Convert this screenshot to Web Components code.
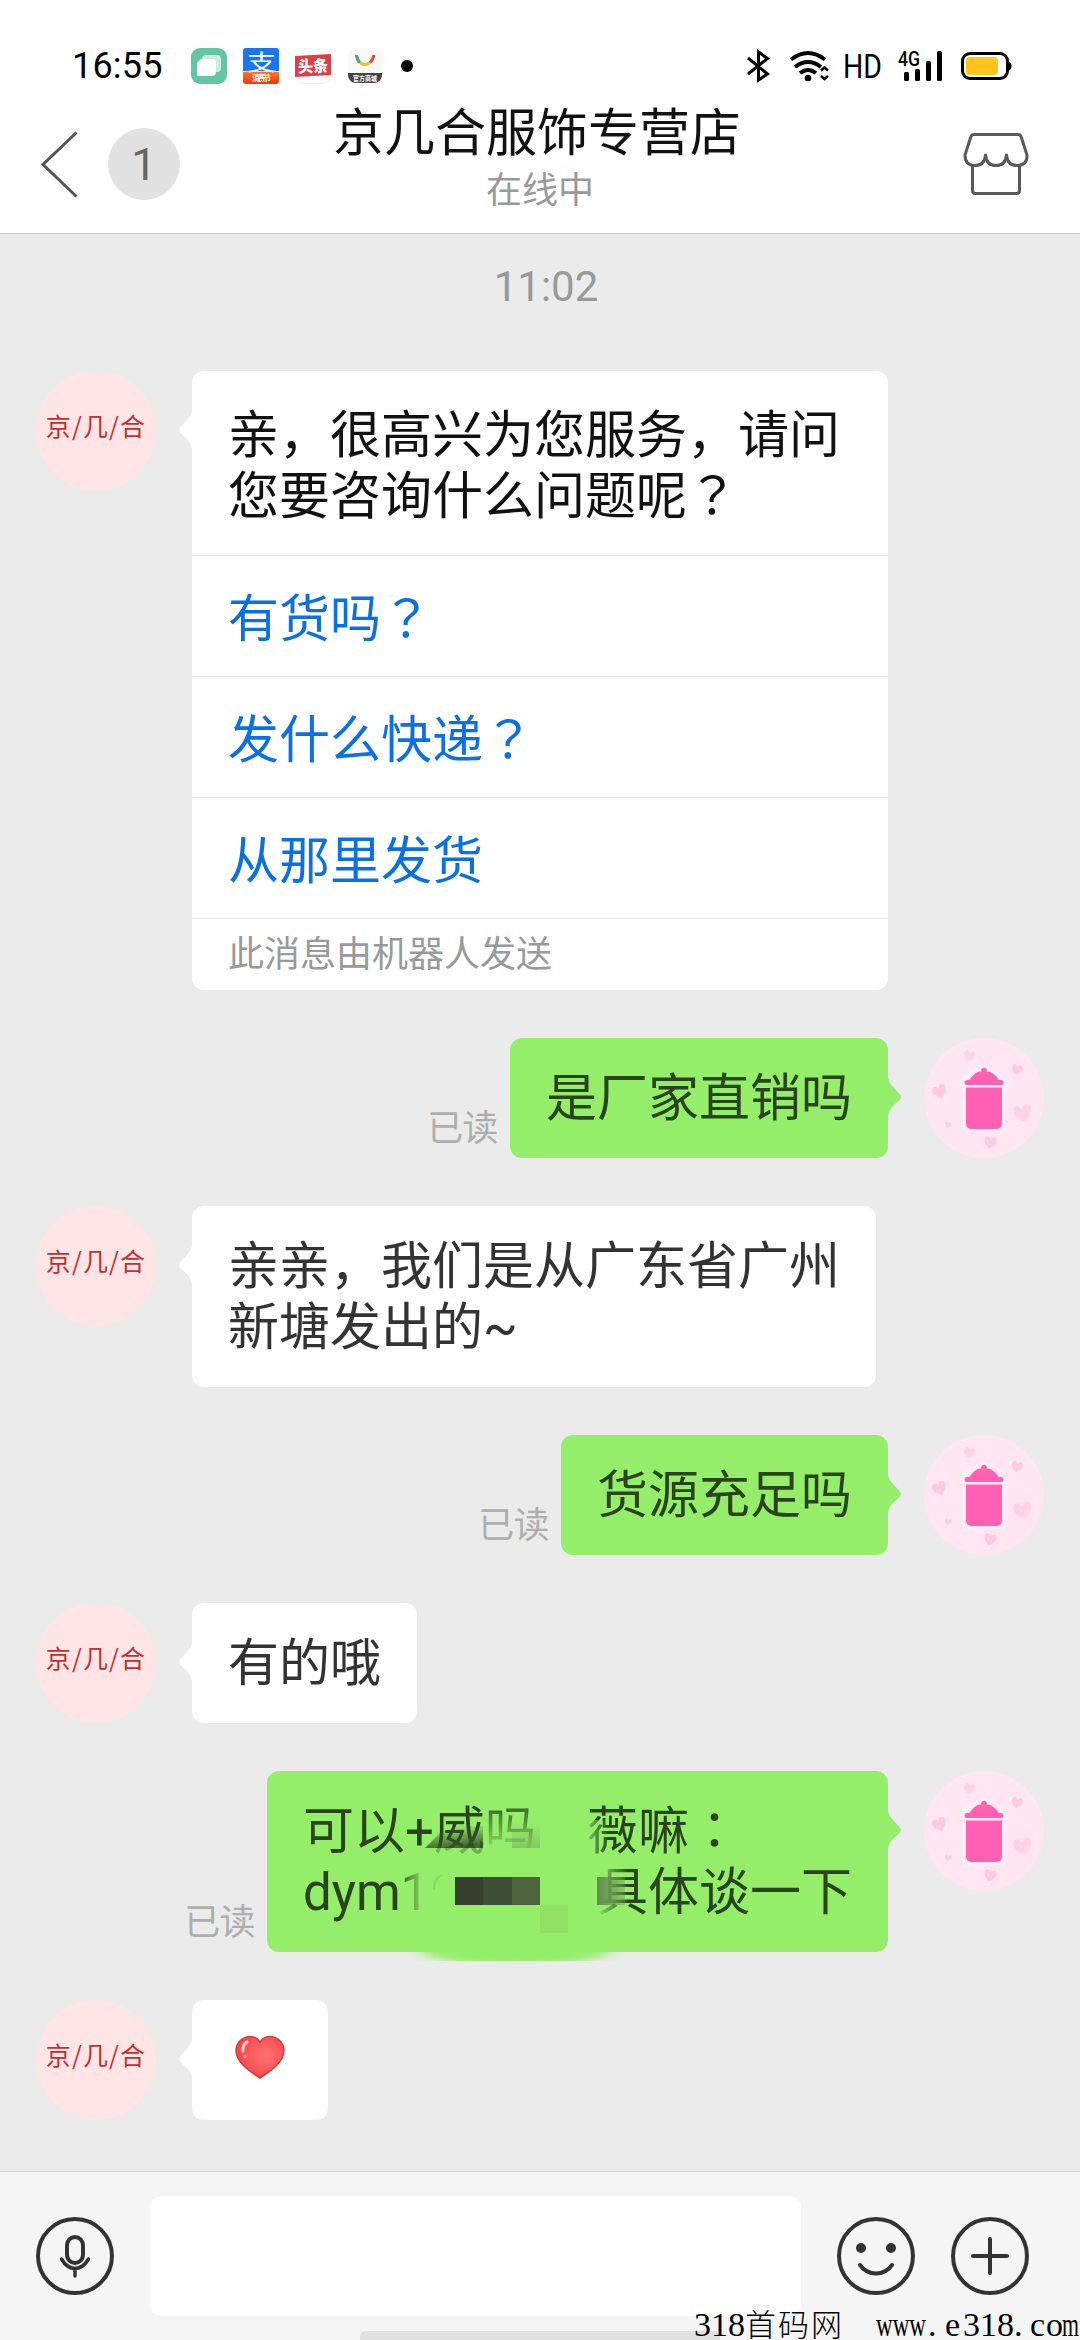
<!DOCTYPE html>
<html lang="zh-CN">
<head>
<meta charset="utf-8">
<title>京几合服饰专营店</title>
<style>
  html, body { margin: 0; padding: 0; }
  body {
    width: 1080px; height: 2340px; overflow: hidden; background: #ebebeb;
    font-family: Roboto, "Noto Sans CJK SC", sans-serif; color: #333;
  }
</style>
</head>
<body>
<chat-page>
  <status-bar slot="top">16:55</status-bar>
  <chat-header slot="top" unread="1"><span slot="title">京几合服饰专营店</span><span slot="state">在线中</span></chat-header>
  <chat-time>11:02</chat-time>
  <chat-message side="left">
    <bot-card>
      <span slot="greeting">亲，很高兴为您服务，请问<br>您要咨询什么问题呢<full-mark lang="zh-TW">？</full-mark></span>
      <bot-option>有货吗<full-mark lang="zh-TW">？</full-mark></bot-option>
      <bot-option>发什么快递<full-mark lang="zh-TW">？</full-mark></bot-option>
      <bot-option>从那里发货</bot-option>
      <span slot="note">此消息由机器人发送</span>
    </bot-card>
  </chat-message>
  <chat-message side="right" read><chat-text>是厂家直销吗</chat-text></chat-message>
  <chat-message side="left"><chat-text>亲亲，我们是从广东省广州<br>新塘发出的~</chat-text></chat-message>
  <chat-message side="right" read><chat-text>货源充足吗</chat-text></chat-message>
  <chat-message side="left"><chat-text>有的哦</chat-text></chat-message>
  <chat-message side="right" read><masked-text><span slot="first">可以+威吗　薇嘛<full-mark lang="zh-TW">：</full-mark></span><span slot="start">dym1</span><span slot="end">具体谈一下</span></masked-text></chat-message>
  <chat-message side="left"><heart-emoji></heart-emoji></chat-message>
  <input-bar slot="bottom"></input-bar>
  <page-mark slot="bottom"></page-mark>
</chat-page>

<script>
const define = (name, html) => {
  const t = document.createElement('template');
  t.innerHTML = html;
  customElements.define(name, class extends HTMLElement {
    constructor() {
      super();
      this.attachShadow({ mode: 'open' }).appendChild(t.content.cloneNode(true));
      const n = this.shadowRoot.querySelector('[data-attr]');
      if (n) n.textContent = this.getAttribute(n.dataset.attr) || '';
    }
  });
};

define('chat-page', `
<style>
  :host { display: flex; flex-direction: column; width: 1080px; height: 2340px; position: relative; overflow: hidden; background: #ebebeb; }
  main { flex: 1; display: flex; flex-direction: column; gap: 48px; }
</style>
<slot name="top"></slot><main><slot></slot></main><slot name="bottom"></slot>`);

define('status-bar', `
<style>
  :host { display: flex; height: 100px; padding: 32px 68px 0 72px; box-sizing: border-box; background: #fff; color: #000; align-items: center; justify-content: space-between; font-size: 36px; }
  .l, .r { display: flex; align-items: center; }
  .time { width: 117px; letter-spacing: .2px; }
  svg { display: block; }
</style>
<div class="l"><span class="time"><slot></slot></span>
<svg width="226" height="40" viewBox="187 46 226 40">
  <defs><linearGradient id="or" x1="0" y1="0" x2="0" y2="1"><stop offset="0" stop-color="#ff7d1c"/><stop offset="1" stop-color="#ee3410"/></linearGradient>
  <clipPath id="al"><rect x="241" y="48" width="36" height="36" rx="3"/></clipPath>
  <clipPath id="ml"><rect x="346" y="48" width="34" height="35" rx="8"/></clipPath></defs>
  <rect x="189" y="48" width="36" height="36" rx="9" fill="#64c5a5"/>
  <rect x="200" y="55" width="19" height="17" rx="4" fill="#c9eee1"/>
  <path d="M199 59H210Q214 59 214 63V72Q214 76 210 76H195V63Z" fill="#fff"/>
  <g clip-path="url(#al)"><rect x="241" y="48" width="36" height="24" fill="#1777f2"/><rect x="241" y="71" width="36" height="13" fill="url(#or)"/></g>
  <text x="245" y="69.500" font-size="22" textLength="29" lengthAdjust="spacingAndGlyphs" fill="#fff">支</text>
  <path d="M241 71.500H277" stroke="#ffe0a0" stroke-width="1"/>
  <text x="250" y="81" font-size="8" textLength="19" fill="#fff" font-weight="700">消费节</text>
  <rect x="293.500" y="48.500" width="35" height="35" rx="8" fill="#fff" stroke="#f1f1f1"/>
  <path d="M293 56L329 54V75L293 77Z" fill="#dd3f48"/>
  <text x="296" y="72" font-size="16" textLength="30" lengthAdjust="spacingAndGlyphs" font-weight="900" fill="#fff" transform="rotate(-2 311 66)">头条</text>
  <rect x="346" y="48" width="34" height="35" rx="8" fill="#f8f8f8"/>
  <g clip-path="url(#ml)"><rect x="345" y="73" width="37" height="12" fill="#444"/></g>
  <text x="351" y="80.500" font-size="6.500" textLength="24" lengthAdjust="spacingAndGlyphs" font-weight="700" fill="#fff">官方商城</text>
  <g fill="none" stroke-width="3"><path d="M354.500 55Q355 60 358 62.500" stroke="#46a96b"/><path d="M358 62.500Q363 66.500 368 62.500" stroke="#edbb35"/><path d="M368 62.500Q371.500 59 372 55" stroke="#d64a3d"/></g>
  <circle cx="405" cy="66" r="6" fill="#000"/>
</svg></div>
<svg class="r" width="268" height="40" viewBox="744 46 268 40">
  <path d="M748 58L767.500 74L758.500 80V52L767.500 58.500L748 74" fill="none" stroke="#000" stroke-width="3"/>
  <g fill="none" stroke="#000" stroke-width="4"><path d="M791 59.500Q808 46.500 825 59.500"/><path d="M795 67Q808 57 821 67"/><path d="M800 73Q808 67 816 73"/><path d="M821 70.500L824.500 67.500L828 70.500M821 76L824.500 79L828 76" stroke-width="2.500"/></g>
  <circle cx="808" cy="78" r="3.300"/>
  <text x="843" y="78" font-size="33.500" textLength="39" lengthAdjust="spacingAndGlyphs">HD</text>
  <text x="898" y="66" font-size="20" font-weight="500" textLength="22" lengthAdjust="spacingAndGlyphs">4G</text>
  <rect x="904" y="72" width="5" height="9" rx="1.500"/><rect x="915" y="69" width="5" height="12" rx="1.500"/><rect x="926" y="61" width="5" height="20" rx="1.500"/><rect x="937" y="51" width="5" height="30" rx="1.500"/>
  <rect x="962.500" y="53.500" width="45" height="25" rx="7.500" fill="#fff" stroke="#000" stroke-width="3"/>
  <path d="M1008 61Q1011.500 62 1011.500 66T1008 71Z"/>
  <rect x="966" y="57" width="32" height="18" rx="4" fill="#fcc41d"/>
</svg>`);

define('chat-header', `
<style>
  :host { display: grid; grid-template-columns: 300px 1fr 300px; height: 134px; box-sizing: border-box; background: #fff; border-bottom: 1px solid #c9c9c9; }
  .l { display: flex; align-items: center; gap: 28px; padding: 0 0 5px 40px; }
  .badge { width: 72px; height: 72px; border-radius: 50%; background: #e1e1e1; color: #666; font-size: 45px; line-height: 74px; text-align: center; }
  .c { display: flex; flex-direction: column; align-items: center; white-space: nowrap; }
  .t { font-size: 51px; line-height: 60px; color: #111; margin-top: 4px; margin-right: 6px; }
  .s { font-size: 36px; line-height: 48px; color: #999; margin-top: 3px; }
  .r { display: flex; align-items: center; justify-content: flex-end; padding: 0 50px 5px 0; }
  svg { display: block; }
</style>
<div class="l"><svg width="40" height="70" viewBox="40 129 40 70"><path d="M76.500 132.500L43 164.500L76.500 196.500" fill="none" stroke="#555" stroke-width="3"/></svg><div class="badge" data-attr="unread"></div></div>
<div class="c"><div class="t"><slot name="title"></slot></div><div class="s"><slot name="state"></slot></div></div>
<div class="r"><svg width="68" height="66" viewBox="962 131 68 66"><g fill="none" stroke="#5a5a5a" stroke-width="3" stroke-linejoin="round"><path d="M974 134.500H1018Q1020.500 134.500 1021.200 137L1027 155Q1027.500 165.500 1017 165.500Q1007.500 165.500 1006.500 155Q1005.500 165.500 996 165.500T985.500 155Q984.500 165.500 975 165.500Q965 165.500 965 155L970.800 137Q971.500 134.500 974 134.500Z"/><path d="M972.500 165V190.500Q972.500 193.500 975.500 193.500H1016.500Q1019.500 193.500 1019.500 190.500V165"/></g></svg></div>`);

define('chat-time', `
<style>:host { display: block; height: 89px; padding-top: 28px; box-sizing: border-box; font-size: 42px; line-height: 50px; color: #999; text-align: center; padding-left: 12px; }</style><slot></slot>`);

define('full-mark', `<style>:host { font-family: "Noto Sans CJK TC", sans-serif; line-height: 0; }</style><slot></slot>`);

define('shop-avatar', `
<style>:host { display: flex; width: 120px; height: 120px; border-radius: 50%; background: #ffe5e5; justify-content: center; box-sizing: border-box; padding-top: 36px; font: 400 25px/37px "Noto Sans CJK SC", sans-serif; letter-spacing: 1.2px; color: #c22f2f; white-space: nowrap; }</style><span>京/几/合</span>`);

define('user-avatar', `
<style>:host, svg { display: block; width: 120px; height: 120px; }</style>
<svg viewBox="0 0 120 120"><defs><path id="h" d="M0 5C-8 0-6-6-2.500-5.500Q-.5-5 0-3Q.5-5 2.500-5.500C6-6 8 0 0 5Z"/></defs>
<circle cx="60" cy="60" r="60" fill="#ffe6f0"/>
<g fill="#fdcadd"><use href="#h" transform="translate(45 18) rotate(12) scale(1)" opacity=".65"/><use href="#h" transform="translate(93 32) rotate(12)"/><use href="#h" transform="translate(16 54) rotate(-22) scale(1.25)"/><use href="#h" transform="translate(99 76) rotate(-12) scale(1.6)" opacity=".7"/><use href="#h" transform="translate(24 87) rotate(12) scale(.6)" opacity=".8"/><use href="#h" transform="translate(66 105) rotate(12) scale(1.1)"/></g>
<path d="M37 41L44 35Q50 30 60 27Q72 31 78 38L83 43L81 92Q77 95 60 95Q41 95 39 91Z" fill="#fff0fa" opacity=".8"/>
<g fill="#ff60b1"><circle cx="60" cy="32.500" r="2.800"/><path d="M44.500 43Q51 33.500 56 33.500H64Q70 34 75.500 43Z"/><rect x="40.500" y="42" width="39" height="5" rx="2.500"/><path d="M42 49.500H78V85Q78 91 72 91H48Q42 91 42 85Z"/></g></svg>`);

define('chat-message', `
<style>
  :host { display: flex; padding: 0 36px; align-items: flex-start; gap: 36px; }
  :host([side="right"]) { flex-direction: row-reverse; }
  .bubble { position: relative; border-radius: 12px; background: #fff; color: #333; }
  :host([side="right"]) .bubble { background: #95ee6a; color: #2a441f; }
  .tail { position: absolute; top: 40px; left: -13px; width: 13px; height: 38px; fill: #fff; }
  :host([side="right"]) .tail { left: auto; right: -13px; transform: scaleX(-1); fill: #95ee6a; }
  user-avatar, .read { display: none; }
  :host([side="right"]) user-avatar { display: block; }
  :host([side="right"]) shop-avatar { display: none; }
  :host([read]) .read { display: block; align-self: flex-end; font-size: 36px; line-height: 48px; color: #aeaeae; margin: 0 -24px 5px 0; letter-spacing: -.6px; }
</style>
<shop-avatar></shop-avatar><user-avatar></user-avatar>
<div class="bubble"><svg class="tail" viewBox="0 0 13 38"><path d="M13 0Q12 5 8 9L1.500 16Q-1 19 1.500 22L8 28Q12 32 13 38Z"/></svg><slot></slot></div>
<div class="read">已读</div>`);
// The elements a message draws for itself depend on its side.
customElements.whenDefined('chat-message').then(() => {
  document.querySelectorAll('chat-message').forEach(m => {
    const drop = m.getAttribute('side') === 'left' ? 'user-avatar, .read' : 'shop-avatar';
    m.shadowRoot.querySelectorAll(drop).forEach(n => n.remove());
  });
});

define('chat-text', `<style>:host { display: block; padding: 30px 36px 29px; font-size: 51px; line-height: 61px; white-space: nowrap; }</style><slot></slot>`);

define('bot-card', `
<style>
  :host { display: flex; flex-direction: column; width: 696px; height: 619px; color: #111; }
  .g { height: 184px; box-sizing: border-box; padding: 34px 36px 0; font-size: 51px; line-height: 61px; white-space: nowrap; }
  .n { border-top: 1px solid #e6e6e6; padding: 11px 36px 0; font-size: 36px; line-height: 50px; color: #999; }
</style>
<div class="g"><slot name="greeting"></slot></div><slot></slot><div class="n"><slot name="note"></slot></div>`);

define('bot-option', `<style>:host { display: block; height: 121px; box-sizing: border-box; border-top: 1px solid #e6e6e6; padding: 0 36px; font-size: 51px; line-height: 127px; color: #0a70e4; }</style><slot></slot>`);

define('masked-text', `
<style>
  :host { display: block; position: relative; width: 549px; height: 181px; box-sizing: content-box; font-size: 51px; line-height: 61px; white-space: nowrap; padding: 0 36px; }
  .pad { padding-top: 30px; height: 61px; }
  .row { display: flex; justify-content: space-between; height: 61px; }
  svg { position: absolute; left: 0; top: 0; overflow: visible; }
</style>
<div class="pad"><slot name="first"></slot></div>
<div class="row"><slot name="start"></slot><slot name="end"></slot></div>
<svg width="621" height="181" viewBox="267 1771 621 181">
  <defs>
    <linearGradient id="d" x1="0" y1="0" x2="0" y2="1"><stop offset="0" stop-color="#95ee6a" stop-opacity="0"/><stop offset="1" stop-color="#95ee6a" stop-opacity=".9"/></linearGradient>
    <linearGradient id="rr"><stop offset="0" stop-color="#95ee6a" stop-opacity=".2"/><stop offset="1" stop-color="#95ee6a"/></linearGradient>
    <linearGradient id="ll"><stop offset="0" stop-color="#95ee6a"/><stop offset="1" stop-color="#95ee6a" stop-opacity="0"/></linearGradient>
    <linearGradient id="k" x1="0" y1="0" x2=".25" y2="1"><stop offset=".1" stop-color="#37532a" stop-opacity="0"/><stop offset="1" stop-color="#37532a" stop-opacity=".85"/></linearGradient>
    <linearGradient id="g"><stop offset="0" stop-color="#5f8a4b"/><stop offset="1" stop-color="#5f8a4b" stop-opacity=".3"/></linearGradient>
    <linearGradient id="q" x1="0" y1="0" x2="0" y2="1"><stop offset="0" stop-color="#67974f" stop-opacity="0"/><stop offset="1" stop-color="#67974f" stop-opacity=".4"/></linearGradient>
    <filter id="b" x="-20%" y="-60%" width="140%" height="220%"><feGaussianBlur stdDeviation="9 4"/></filter>
    <clipPath id="cl"><rect x="400" y="1952" width="240" height="9"/></clipPath>
  </defs>
  <rect x="488" y="1795" width="52" height="53" fill="url(#d)"/>
  <rect x="488" y="1848" width="52" height="12" fill="#95ee6a"/>
  <path d="M425 1848L440 1833L455 1826H483V1848Z" fill="url(#k)"/>
  <rect x="434" y="1848" width="52" height="10" fill="#95ee6a" opacity=".65"/>
  <rect x="512" y="1822" width="28" height="26" fill="url(#q)"/>
  <rect x="587" y="1820" width="22" height="40" fill="url(#ll)" opacity=".75"/>
  <rect x="402" y="1868" width="24" height="46" fill="url(#rr)"/>
  <path d="M434 1890Q434 1877 443 1875" fill="none" stroke="#7cc75c" stroke-width="2" opacity=".5"/>
  <rect x="595" y="1864" width="34" height="58" fill="url(#ll)"/>
  <rect x="455" y="1877" width="29" height="28" fill="#353f2c"/><rect x="483" y="1877" width="29" height="28" fill="#3e4e35"/><rect x="512" y="1877" width="28" height="28" fill="#4c653f"/>
  <rect x="540" y="1905" width="28" height="28" fill="#91e168"/>
  <rect x="597" y="1877" width="28" height="28" fill="url(#g)"/>
  <g clip-path="url(#cl)"><ellipse cx="516" cy="1948" rx="96" ry="19" fill="#95ee6a" filter="url(#b)"/></g>
</svg>`);

define('heart-emoji', `
<style>:host { display: flex; width: 136px; height: 120px; align-items: center; justify-content: center; } svg { display: block; margin-bottom: 6px; }</style>
<svg width="52" height="46" viewBox="0 0 52 46"><defs><radialGradient id="r" cx=".6" cy=".45" r=".6"><stop offset="0" stop-color="#ff7474"/><stop offset="1" stop-color="#f84447"/></radialGradient></defs>
<path d="M26 44C12 35 2 27 2 16C2 4 19-3 26 8C33-3 50 4 50 16C50 27 40 35 26 44Z" fill="url(#r)" stroke="#c93d3c" stroke-width="1.500"/>
<path d="M9 17Q8 11 13 8" fill="none" stroke="#fff" stroke-opacity=".75" stroke-width="3" stroke-linecap="round"/><circle cx="11" cy="22.500" r="1.700" fill="#fff" opacity=".45"/></svg>`);

define('input-bar', `
<style>
  :host { display: flex; height: 169px; box-sizing: border-box; border-top: 1px solid #d2d2d2; background: #f5f5f5; padding: 24px 51px 0 36px; align-items: flex-start; position: relative; }
  .box { width: 651px; height: 120px; background: #fff; border-radius: 12px; margin: 0 36px; }
  svg { display: block; margin-top: 21px; fill: none; stroke: #333; stroke-width: 4; stroke-linecap: round; }
  .plus { margin-left: 36px; }
  .nav { position: absolute; left: 360px; bottom: 0; width: 360px; height: 9px; border-radius: 5px 5px 0 0; background: #e0e0e0; }
</style>
<svg width="78" height="78" viewBox="0 0 78 78"><circle cx="39" cy="39" r="37"/><rect x="31" y="20" width="16" height="26" rx="8"/><path d="M25.500 42Q31 51.500 39 51.500T52.500 42M39 52V59" stroke-width="3.500"/></svg>
<div class="box"></div>
<svg width="78" height="78" viewBox="0 0 78 78"><circle cx="39" cy="39" r="37"/><g fill="#333" stroke="none"><circle cx="24" cy="31" r="5"/><circle cx="54" cy="31" r="5"/></g><path d="M23 48Q29 56.500 39 56.500T55 48"/></svg>
<svg class="plus" width="78" height="78" viewBox="0 0 78 78"><circle cx="39" cy="39" r="37"/><path d="M22 39H56M39 22V56"/></svg>
<div class="nav"></div>`);

define('page-mark', `
<style>:host { display: block; position: absolute; right: 0; bottom: 0; } svg { display: block; overflow: visible; }</style>
<svg width="390" height="60" viewBox="690 2280 390 60"><text y="2336" font-family="Liberation Serif, Noto Sans CJK SC, serif" font-size="34" font-weight="300" fill="#000"><tspan x="694">318</tspan><tspan x="745" font-size="31" textLength="97" style="font-family:'Noto Sans CJK SC',sans-serif">首码网</tspan><tspan x="876" textLength="50" lengthAdjust="spacingAndGlyphs">www</tspan><tspan x="928">.</tspan><tspan x="945">e</tspan><tspan x="963">318</tspan><tspan x="1014">.</tspan><tspan x="1030">c</tspan><tspan x="1046">o</tspan><tspan x="1062" textLength="17" lengthAdjust="spacingAndGlyphs">m</tspan></text></svg>`);
</script>
</body>
</html>
